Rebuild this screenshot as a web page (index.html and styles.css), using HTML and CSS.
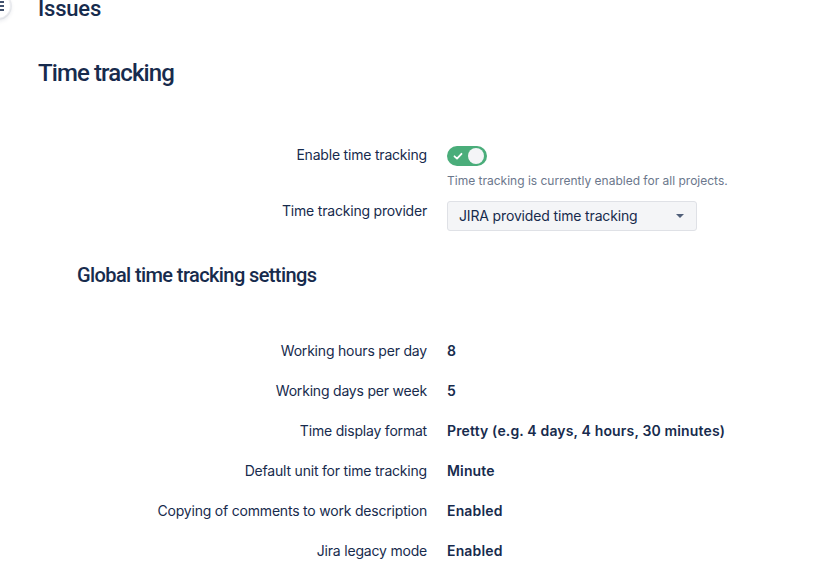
FILE: index.html
```html
<!DOCTYPE html>
<html lang="en">
<head>
<meta charset="utf-8">
<title>Time tracking</title>
<link rel="stylesheet" href="styles.css">
</head>
<body>
<button class="nav-toggle" aria-label="Menu">
  <span class="bars"><i></i><i></i><i></i></span>
</button>
<main class="page">
  <h1 class="crumb">Issues</h1>
  <h2 class="title">Time tracking</h2>

  <div class="form">
    <div class="row">
      <div class="label">Enable time tracking</div>
      <div class="field">
        <span class="toggle">
          <svg class="check" width="12" height="12" viewBox="0 0 12 12"><path d="M2.5 6.3 L5 8.6 L9.5 3.8" fill="none" stroke="#fff" stroke-width="1.8" stroke-linecap="round" stroke-linejoin="round"/></svg>
          <span class="knob"></span>
        </span>
        <div class="help">Time tracking is currently enabled for all projects.</div>
      </div>
    </div>
    <div class="row">
      <div class="label">Time tracking provider</div>
      <div class="field">
        <div class="select">
          <span>JIRA provided time tracking</span>
          <svg class="caret" width="10" height="6" viewBox="0 0 10 6"><path d="M1 1 L9 1 L5 5 Z" fill="#505f79"/></svg>
        </div>
      </div>
    </div>
  </div>

  <h3 class="subtitle">Global time tracking settings</h3>

  <div class="list">
    <div class="item"><div class="label">Working hours per day</div><div class="value">8</div></div>
    <div class="item"><div class="label">Working days per week</div><div class="value">5</div></div>
    <div class="item"><div class="label">Time display format</div><div class="value">Pretty (e.g. 4 days, 4 hours, 30 minutes)</div></div>
    <div class="item"><div class="label">Default unit for time tracking</div><div class="value">Minute</div></div>
    <div class="item"><div class="label">Copying of comments to work description</div><div class="value">Enabled</div></div>
    <div class="item"><div class="label">Jira legacy mode</div><div class="value">Enabled</div></div>
  </div>
</main>
</body>
</html>
```
FILE: styles.css
```css
* { box-sizing: border-box; }
html, body { margin: 0; padding: 0; background: #fff; }
body {
  font-family: Inter, "Noto Sans", "Liberation Sans", sans-serif;
  color: #172b4d;
  overflow: hidden;
}
.nav-toggle {
  position: absolute;
  left: -15px;
  top: -7px;
  width: 26px;
  height: 26px;
  border-radius: 50%;
  background: #fff;
  border: 1px solid #ebecf0;
  box-shadow: 0 0 0 1px rgba(9,30,66,0.06), 0 2px 4px rgba(9,30,66,0.1);
  padding: 0;
}
.nav-toggle .bars {
  position: absolute;
  left: 10px;
  top: 7px;
  display: flex;
  flex-direction: column;
  gap: 2px;
}
.nav-toggle .bars i {
  display: block;
  width: 8px;
  height: 2px;
  background: #42526e;
}
.page { padding-left: 38px; }
.crumb, .title, .subtitle {
  font-family: Roboto, Inter, "Liberation Sans", sans-serif;
  font-weight: 500;
  color: #172b4d;
}
.crumb {
  margin: -4px 0 0;
  font-size: 22px;
  line-height: 26px;
  letter-spacing: -0.2px;
}
.title {
  margin: 37px 0 0;
  font-size: 24px;
  line-height: 28px;
  letter-spacing: -0.9px;
}
.form {
  margin-top: 58px;
  display: flex;
  flex-direction: column;
  gap: 12px;
}
.row, .item {
  display: grid;
  grid-template-columns: 389px 1fr;
  column-gap: 20px;
  font-size: 14px;
  line-height: 20px;
}
.label { text-align: right; color: #172b4d; letter-spacing: -0.2px; }
.field { display: flex; flex-direction: column; align-items: flex-start; }
.toggle {
  position: relative;
  display: inline-block;
  width: 40px;
  height: 20px;
  margin-top: 1px;
  border-radius: 10px;
  background: #4aad7a;
}
.toggle .check { position: absolute; left: 5px; top: 4px; }
.toggle .knob {
  position: absolute;
  right: 3px;
  top: 2px;
  width: 16px;
  height: 16px;
  border-radius: 50%;
  background: #f4f5f7;
}
.help {
  margin-top: 7px;
  font-size: 12px;
  line-height: 16px;
  color: #6b778c;
}
.select {
  width: 250px;
  height: 30px;
  display: flex;
  align-items: center;
  justify-content: space-between;
  padding: 0 11px;
  background: #f4f5f7;
  border: 1px solid #dfe1e6;
  border-radius: 3px;
  color: #172b4d;
  font-size: 14px;
  letter-spacing: -0.15px;
}
.subtitle {
  margin: 32px 0 0 39px;
  font-size: 20px;
  line-height: 24px;
  letter-spacing: -0.6px;
}
.list {
  margin-top: 54px;
  display: flex;
  flex-direction: column;
  gap: 20px;
}
.value { font-weight: 600; color: #172b4d; letter-spacing: 0.15px; }
```
